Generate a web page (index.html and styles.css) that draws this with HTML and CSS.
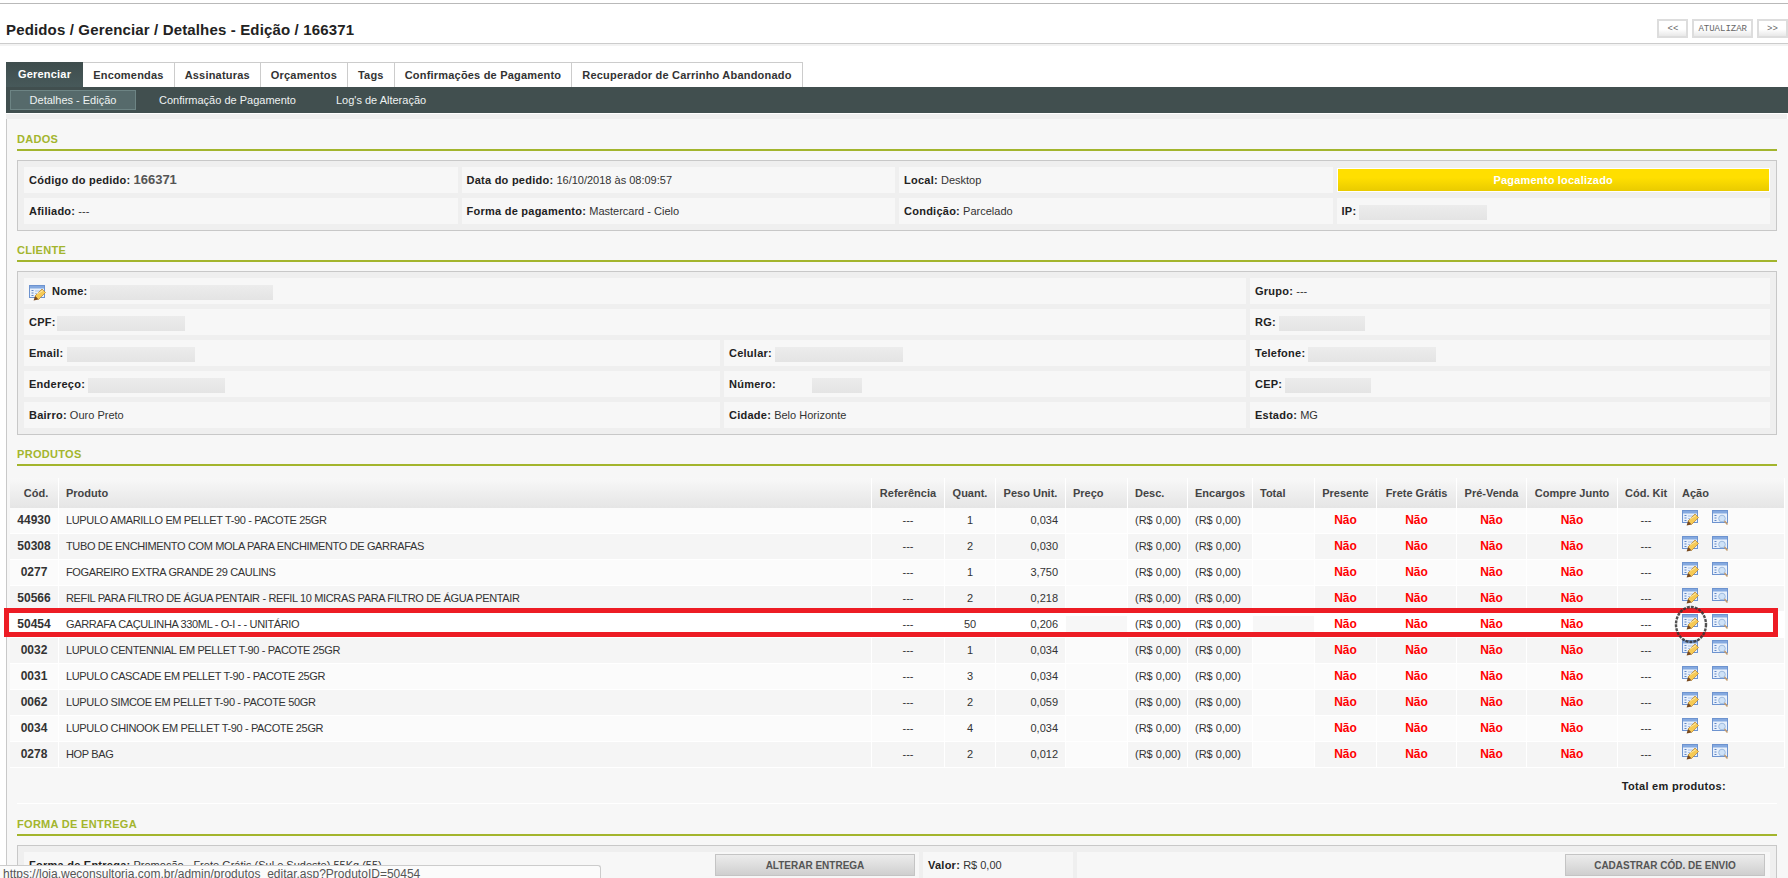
FILE: index.html
```html
<!DOCTYPE html>
<html lang="pt-BR">
<head>
  <meta charset="UTF-8">
  <title>Pedidos / Gerenciar / Detalhes - Edição / 166371</title>
  <link rel="stylesheet" href="styles.css">
</head>
<body>
  <!-- icones usados no cliente e na tabela de produtos -->
  <svg class="defs" width="0" height="0">
    <symbol id="ic-edit" viewBox="0 0 17 17">
      <rect x="0.5" y="1.5" width="15" height="12" fill="#e8f0fb" stroke="#6d93cf"/>
      <rect x="1" y="2" width="14" height="2.5" fill="#84a9e0"/>
      <path d="M2.5 6.5h2M2.5 9h2M2.5 11.5h2" stroke="#5f86c6"/>
      <path d="M6 7h5M6 9.5h2" stroke="#a9c1e6"/>
      <path d="M6 12 13 5 16.5 8.5 9.5 15.5z" fill="#f6ca55" stroke="#b9812a" stroke-width="0.7"/>
      <path d="M8 10 14 6.5" stroke="#fbe7a5"/>
      <path d="M6 12 9.5 15.5 4.6 16.6z" fill="#7a4a1e"/>
    </symbol>
    <symbol id="ic-view" viewBox="0 0 17 17">
      <rect x="0.5" y="1.5" width="15" height="12" fill="#e8f0fb" stroke="#6d93cf"/>
      <rect x="1" y="2" width="14" height="2.5" fill="#84a9e0"/>
      <path d="M2.5 6.5h2M2.5 9h2M2.5 11.5h2" stroke="#5f86c6"/>
      <circle cx="10" cy="9.5" r="3.3" fill="#cfe2f7" stroke="#9dbbe0"/>
      <path d="M12.5 12 15.5 15.5" stroke="#c09a70" stroke-width="1.6"/>
    </symbol>
  </svg>

  <div class="topline"></div>

  <header class="page-head">
    <h1>Pedidos / Gerenciar / Detalhes - Edição / 166371</h1>
    <div class="head-btns">
      <a class="mini-btn">&lt;&lt;</a>
      <a class="mini-btn">ATUALIZAR</a>
      <a class="mini-btn">&gt;&gt;</a>
    </div>
  </header>

  <nav class="tabs">
    <a class="tab active">Gerenciar</a>
    <a class="tab">Encomendas</a>
    <a class="tab">Assinaturas</a>
    <a class="tab">Orçamentos</a>
    <a class="tab">Tags</a>
    <a class="tab">Confirmações de Pagamento</a>
    <a class="tab">Recuperador de Carrinho Abandonado</a>
  </nav>
  <nav class="subtabs">
    <a class="subtab active">Detalhes - Edição</a>
    <a class="subtab sub-pag">Confirmação de Pagamento</a>
    <a class="subtab sub-log">Log's de Alteração</a>
  </nav>
  <div class="band"></div>

  <main class="panel">
    <h2 class="section-title">DADOS</h2>
    <div class="box grid-dados">
      <div class="field"><b>Código do pedido:</b> <span class="big">166371</span></div>
      <div class="field"><b>Data do pedido:</b> 16/10/2018 às 08:09:57</div>
      <div class="field"><b>Local:</b> Desktop</div>
      <div class="status">Pagamento localizado</div>
      <div class="field"><b>Afiliado:</b> ---</div>
      <div class="field"><b>Forma de pagamento:</b> Mastercard - Cielo</div>
      <div class="field"><b>Condição:</b> Parcelado</div>
      <div class="field"><b>IP:</b><i class="hide w128"></i></div>
    </div>

    <h2 class="section-title">CLIENTE</h2>
    <div class="box grid-cliente">
      <div class="field span2"><svg class="ic ic-nome"><use href="#ic-edit"/></svg><b>Nome:</b><i class="hide w183"></i></div>
      <div class="field"><b>Grupo:</b> ---</div>
      <div class="field span2"><b>CPF:</b><i class="hide w128 near"></i></div>
      <div class="field"><b>RG:</b><i class="hide w86"></i></div>
      <div class="field"><b>Email:</b><i class="hide w128"></i></div>
      <div class="field"><b>Celular:</b><i class="hide w128"></i></div>
      <div class="field"><b>Telefone:</b><i class="hide w128"></i></div>
      <div class="field"><b>Endereço:</b><i class="hide w137"></i></div>
      <div class="field"><b>Número:</b><i class="hide w50 far"></i></div>
      <div class="field"><b>CEP:</b><i class="hide w86"></i></div>
      <div class="field"><b>Bairro:</b> Ouro Preto</div>
      <div class="field"><b>Cidade:</b> Belo Horizonte</div>
      <div class="field"><b>Estado:</b> MG</div>
    </div>

    <h2 class="section-title">PRODUTOS</h2>
    <div class="table-wrap">
      <table class="produtos">
        <colgroup>
          <col class="c49"><col class="c813"><col class="c73"><col class="c51"><col class="c70">
          <col class="c62"><col class="c60"><col class="c65"><col class="c62"><col class="c62">
          <col class="c80"><col class="c70"><col class="c91"><col class="c57"><col class="c110">
        </colgroup>
        <thead>
          <tr>
            <th class="ctr">Cód.</th><th>Produto</th><th class="ctr">Referência</th><th class="ctr">Quant.</th><th class="ctr">Peso Unit.</th>
            <th>Preço</th><th>Desc.</th><th>Encargos</th><th>Total</th><th class="ctr">Presente</th>
            <th class="ctr">Frete Grátis</th><th class="ctr">Pré-Venda</th><th class="ctr">Compre Junto</th><th class="ctr">Cód. Kit</th><th>Ação</th>
          </tr>
        </thead>
        <tbody>
          <tr>
            <td class="cod">44930</td><td class="nome">LUPULO AMARILLO EM PELLET T-90 - PACOTE 25GR</td><td class="ctr">---</td><td class="ctr">1</td><td class="num">0,034</td>
            <td class="oculto"></td><td>(R$ 0,00)</td><td>(R$ 0,00)</td><td class="oculto"></td><td class="nao">Não</td>
            <td class="nao">Não</td><td class="nao">Não</td><td class="nao">Não</td><td class="ctr">---</td>
            <td class="acao"><svg class="ic"><use href="#ic-edit"/></svg><svg class="ic"><use href="#ic-view"/></svg></td>
          </tr>
          <tr>
            <td class="cod">50308</td><td class="nome">TUBO DE ENCHIMENTO COM MOLA PARA ENCHIMENTO DE GARRAFAS</td><td class="ctr">---</td><td class="ctr">2</td><td class="num">0,030</td>
            <td class="oculto"></td><td>(R$ 0,00)</td><td>(R$ 0,00)</td><td class="oculto"></td><td class="nao">Não</td>
            <td class="nao">Não</td><td class="nao">Não</td><td class="nao">Não</td><td class="ctr">---</td>
            <td class="acao"><svg class="ic"><use href="#ic-edit"/></svg><svg class="ic"><use href="#ic-view"/></svg></td>
          </tr>
          <tr>
            <td class="cod">0277</td><td class="nome">FOGAREIRO EXTRA GRANDE 29 CAULINS</td><td class="ctr">---</td><td class="ctr">1</td><td class="num">3,750</td>
            <td class="oculto"></td><td>(R$ 0,00)</td><td>(R$ 0,00)</td><td class="oculto"></td><td class="nao">Não</td>
            <td class="nao">Não</td><td class="nao">Não</td><td class="nao">Não</td><td class="ctr">---</td>
            <td class="acao"><svg class="ic"><use href="#ic-edit"/></svg><svg class="ic"><use href="#ic-view"/></svg></td>
          </tr>
          <tr>
            <td class="cod">50566</td><td class="nome">REFIL PARA FILTRO DE ÁGUA PENTAIR - REFIL 10 MICRAS PARA FILTRO DE ÁGUA PENTAIR</td><td class="ctr">---</td><td class="ctr">2</td><td class="num">0,218</td>
            <td class="oculto"></td><td>(R$ 0,00)</td><td>(R$ 0,00)</td><td class="oculto"></td><td class="nao">Não</td>
            <td class="nao">Não</td><td class="nao">Não</td><td class="nao">Não</td><td class="ctr">---</td>
            <td class="acao"><svg class="ic"><use href="#ic-edit"/></svg><svg class="ic"><use href="#ic-view"/></svg></td>
          </tr>
          <tr class="marcada">
            <td class="cod">50454</td><td class="nome">GARRAFA CAÇULINHA 330ML - O-I - - UNITÁRIO</td><td class="ctr">---</td><td class="ctr">50</td><td class="num">0,206</td>
            <td class="oculto"></td><td>(R$ 0,00)</td><td>(R$ 0,00)</td><td class="oculto"></td><td class="nao">Não</td>
            <td class="nao">Não</td><td class="nao">Não</td><td class="nao">Não</td><td class="ctr">---</td>
            <td class="acao"><svg class="ic"><use href="#ic-edit"/></svg><svg class="ic"><use href="#ic-view"/></svg></td>
          </tr>
          <tr>
            <td class="cod">0032</td><td class="nome">LUPULO CENTENNIAL EM PELLET T-90 - PACOTE 25GR</td><td class="ctr">---</td><td class="ctr">1</td><td class="num">0,034</td>
            <td class="oculto"></td><td>(R$ 0,00)</td><td>(R$ 0,00)</td><td class="oculto"></td><td class="nao">Não</td>
            <td class="nao">Não</td><td class="nao">Não</td><td class="nao">Não</td><td class="ctr">---</td>
            <td class="acao"><svg class="ic"><use href="#ic-edit"/></svg><svg class="ic"><use href="#ic-view"/></svg></td>
          </tr>
          <tr>
            <td class="cod">0031</td><td class="nome">LUPULO CASCADE EM PELLET T-90 - PACOTE 25GR</td><td class="ctr">---</td><td class="ctr">3</td><td class="num">0,034</td>
            <td class="oculto"></td><td>(R$ 0,00)</td><td>(R$ 0,00)</td><td class="oculto"></td><td class="nao">Não</td>
            <td class="nao">Não</td><td class="nao">Não</td><td class="nao">Não</td><td class="ctr">---</td>
            <td class="acao"><svg class="ic"><use href="#ic-edit"/></svg><svg class="ic"><use href="#ic-view"/></svg></td>
          </tr>
          <tr>
            <td class="cod">0062</td><td class="nome">LUPULO SIMCOE EM PELLET T-90 - PACOTE 50GR</td><td class="ctr">---</td><td class="ctr">2</td><td class="num">0,059</td>
            <td class="oculto"></td><td>(R$ 0,00)</td><td>(R$ 0,00)</td><td class="oculto"></td><td class="nao">Não</td>
            <td class="nao">Não</td><td class="nao">Não</td><td class="nao">Não</td><td class="ctr">---</td>
            <td class="acao"><svg class="ic"><use href="#ic-edit"/></svg><svg class="ic"><use href="#ic-view"/></svg></td>
          </tr>
          <tr>
            <td class="cod">0034</td><td class="nome">LUPULO CHINOOK EM PELLET T-90 - PACOTE 25GR</td><td class="ctr">---</td><td class="ctr">4</td><td class="num">0,034</td>
            <td class="oculto"></td><td>(R$ 0,00)</td><td>(R$ 0,00)</td><td class="oculto"></td><td class="nao">Não</td>
            <td class="nao">Não</td><td class="nao">Não</td><td class="nao">Não</td><td class="ctr">---</td>
            <td class="acao"><svg class="ic"><use href="#ic-edit"/></svg><svg class="ic"><use href="#ic-view"/></svg></td>
          </tr>
          <tr>
            <td class="cod">0278</td><td class="nome">HOP BAG</td><td class="ctr">---</td><td class="ctr">2</td><td class="num">0,012</td>
            <td class="oculto"></td><td>(R$ 0,00)</td><td>(R$ 0,00)</td><td class="oculto"></td><td class="nao">Não</td>
            <td class="nao">Não</td><td class="nao">Não</td><td class="nao">Não</td><td class="ctr">---</td>
            <td class="acao"><svg class="ic"><use href="#ic-edit"/></svg><svg class="ic"><use href="#ic-view"/></svg></td>
          </tr>
        </tbody>
      </table>
      <!-- marcacao feita sobre o print -->
      <div class="red-mark"></div>
      <svg class="circle-mark" width="34" height="39"><ellipse cx="17" cy="19.5" rx="15" ry="17.5" fill="none" stroke="#333" stroke-width="2.4" stroke-dasharray="3 1" opacity="0.85"/></svg>
    </div>
    <div class="total-produtos"><b>Total em produtos:</b></div>

    <h2 class="section-title">FORMA DE ENTREGA</h2>
    <div class="box grid-entrega">
      <div class="field entrega-cell">
        <span><b>Forma de Entrega:</b> Promoção - Frete Grátis (Sul e Sudeste) 55Kg (55)</span>
        <a class="gray-btn">ALTERAR ENTREGA</a>
      </div>
      <div class="field"><b>Valor:</b> R$ 0,00</div>
      <div class="field envio-cell"><a class="gray-btn">CADASTRAR CÓD. DE ENVIO</a></div>
    </div>
  </main>

  <div class="status-url">https://loja.weconsultoria.com.br/admin/produtos_editar.asp?ProdutoID=50454</div>
</body>
</html>
```
FILE: styles.css
```css
html, body {
  height: 878px;
  overflow: hidden;
}

body {
  margin: 0;
  background: #fff;
  font-family: "Liberation Sans", Arial, sans-serif;
  font-size: 11px;
  color: #333;
}

.defs {
  position: absolute;
}

.topline {
  height: 3px;
  border-bottom: 1px solid #b9b9b9;
}

/* cabecalho */
.page-head {
  display: flex;
  justify-content: space-between;
  height: 40px;
  padding-left: 6px;
  box-sizing: border-box;
  border-bottom: 1px solid #ccc;
  box-shadow: 0 2px 0 #f3f3f3;
}

.page-head h1 {
  margin: 17px 0 0;
  font-size: 15px;
  line-height: 17px;
  letter-spacing: 0.15px;
  color: #222;
}

.head-btns {
  display: flex;
  gap: 4px;
  padding-top: 15px;
  height: 19px;
}

.mini-btn {
  display: block;
  min-width: 31px;
  padding: 0 4px;
  height: 19px;
  box-sizing: border-box;
  border: 2px solid #ddd;
  background: linear-gradient(#fff 55%, #e8e8e8);
  font-family: "Liberation Mono", monospace;
  font-size: 9px;
  line-height: 16px;
  color: #666;
  text-align: center;
}

/* abas */
.tabs {
  display: flex;
  margin: 18px 0 0 6px;
  height: 25px;
}

.tab {
  padding: 0 10px;
  border: 1px solid #ccc;
  border-left: 0;
  border-bottom: 0;
  font-weight: bold;
  line-height: 25px;
  letter-spacing: 0.2px;
  color: #333;
}

.tab.active {
  border: 0;
  background: linear-gradient(#3f4d4d, #47595a);
  padding: 0 12px;
  color: #fff;
}

.subtabs {
  display: flex;
  align-items: center;
  height: 26px;
  margin-left: 6px;
  padding-left: 4px;
  background: #414f4f;
}

.subtab {
  color: #eef2f2;
  line-height: 18px;
}

.subtab.active {
  width: 126px;
  box-sizing: border-box;
  border: 1px solid #6d8484;
  background: #566a6b;
  text-align: center;
}

.sub-pag {
  margin-left: 23px;
}

.sub-log {
  margin-left: 40px;
}

.band {
  height: 5px;
  margin: 1px 1px 0 6px;
  background: #efefef;
}

/* area principal */
.panel {
  height: 760px;
  padding: 11px 11px 0 10px;
  box-sizing: border-box;
  border-left: 1px solid #c9c9c9;
  margin-left: 6px;
  background: #f7f7f7;
}

.section-title {
  margin: 10px 0 0;
  height: 19px;
  border-bottom: 2px solid #a3b52d;
  font-size: 11px;
  line-height: 18px;
  letter-spacing: 0.3px;
  color: #a3b52d;
}

.panel > .section-title:first-child {
  margin-top: 0;
}

.box {
  display: grid;
  gap: 5px 4px;
  margin-top: 9px;
  padding: 6px;
  border: 1px solid #c8c8c8;
  background: #efefef;
  grid-auto-rows: 26px;
}

.grid-dados {
  grid-template-columns: repeat(4, 1fr);
}

.grid-cliente {
  grid-template-columns: 696px 522px 1fr;
}

.grid-entrega {
  grid-template-columns: 895px 150px 1fr;
}

.field {
  padding: 0 5px;
  background: #f7f7f7;
  line-height: 26px;
}

.field b {
  letter-spacing: 0.25px;
  color: #222;
}

.span2 {
  grid-column: span 2;
}

.big {
  font-size: 13px;
  font-weight: bold;
  color: #555;
}

.status {
  margin: 1px 0;
  border: 1px solid #fff;
  background: linear-gradient(#ffdf00 40%, #e9cb00);
  font-weight: bold;
  letter-spacing: 0.2px;
  line-height: 22px;
  text-align: center;
  color: #fff;
}

.hide {
  display: inline-block;
  height: 15px;
  margin-left: 3px;
  vertical-align: middle;
  background: linear-gradient(#ececec, #e4e4e4);
}

.hide.far {
  margin-left: 36px;
}

.hide.near {
  margin-left: 1px;
}

.w50 { width: 50px; }
.w86 { width: 86px; }
.w128 { width: 128px; }
.w137 { width: 137px; }
.w183 { width: 183px; }

.ic {
  width: 17px;
  height: 17px;
}

.ic-nome {
  margin-right: 6px;
  vertical-align: middle;
}

/* tabela de produtos */
.table-wrap {
  position: relative;
  margin: 12px -8px 0 -7px;
}

.produtos {
  width: 1775px;
  table-layout: fixed;
  border-collapse: separate;
  border-spacing: 0;
}

.c49 { width: 49px; }
.c813 { width: 813px; }
.c73 { width: 73px; }
.c51 { width: 51px; }
.c70 { width: 70px; }
.c62 { width: 62px; }
.c60 { width: 60px; }
.c65 { width: 65px; }
.c80 { width: 80px; }
.c91 { width: 91px; }
.c57 { width: 57px; }
.c110 { width: 110px; }

.produtos th {
  height: 30px;
  padding: 0 7px;
  box-sizing: border-box;
  border-right: 1px solid #fff;
  background: linear-gradient(#f8f8f8, #e5e5e5);
  font-size: 11px;
  color: #444;
  text-align: left;
  white-space: nowrap;
}

.produtos th:first-child {
  padding-left: 11px;
}

.produtos td {
  height: 26px;
  padding: 0 7px 2px;
  box-sizing: border-box;
  border-right: 1px solid #fff;
  border-bottom: 1px solid #fff;
  background: #fbfbfb;
  color: #333;
  white-space: nowrap;
}

.produtos tbody tr:nth-child(even) td {
  background: #f5f5f5;
}

.produtos tbody tr.marcada td {
  background: #fff;
}

.produtos th.ctr,
.produtos td.ctr {
  text-align: center;
}

.produtos td.cod {
  padding: 0 0 2px;
  font-size: 12px;
  font-weight: bold;
  color: #333;
  text-align: center;
}

.produtos td.nome {
  letter-spacing: -0.36px;
}

.produtos td.num {
  text-align: right;
}

.produtos td.oculto,
.produtos tbody tr:nth-child(even) td.oculto {
  background: #fbfbfb;
}

.produtos tbody tr.marcada td.oculto {
  background: linear-gradient(#fff 4px, #f7f7f7 4px, #f7f7f7 20px, #fff 20px);
}

.produtos td.nao {
  padding: 0 0 2px;
  font-size: 12px;
  font-weight: bold;
  color: #f00;
  text-align: center;
}

.produtos td.acao .ic {
  display: inline-block;
  margin-right: 13px;
  margin-bottom: 4px;
  vertical-align: middle;
}

.red-mark {
  position: absolute;
  top: 130px;
  left: -6px;
  right: 7px;
  height: 29px;
  box-sizing: border-box;
  border: 5px solid #ed1c24;
}

.circle-mark {
  position: absolute;
  top: 127px;
  left: 1664px;
}

.total-produtos {
  height: 35px;
  padding-right: 51px;
  border-bottom: 1px solid #fff;
  line-height: 36px;
  text-align: right;
}

.total-produtos b {
  letter-spacing: 0.3px;
  color: #222;
}

.total-produtos + .section-title {
  margin-top: 11px;
}

.entrega-cell {
  display: flex;
  justify-content: space-between;
  padding-right: 4px;
}

.envio-cell {
  display: flex;
  justify-content: flex-end;
}

.gray-btn {
  display: block;
  width: 200px;
  height: 22px;
  margin-top: 2px;
  box-sizing: border-box;
  border: 1px solid #c4c4c4;
  background: linear-gradient(#ececec, #cfcfcf);
  font-size: 10px;
  font-weight: bold;
  line-height: 22px;
  text-align: center;
  color: #555;
}

/* url na barra de status do navegador */
.status-url {
  position: absolute;
  left: -1px;
  bottom: 0;
  width: 597px;
  height: 12px;
  padding-left: 3px;
  border: 1px solid #ccc;
  border-bottom: 0;
  border-top-right-radius: 3px;
  background: #fbfbfb;
  font-size: 12px;
  line-height: 16px;
  color: #555;
  overflow: hidden;
}
```
